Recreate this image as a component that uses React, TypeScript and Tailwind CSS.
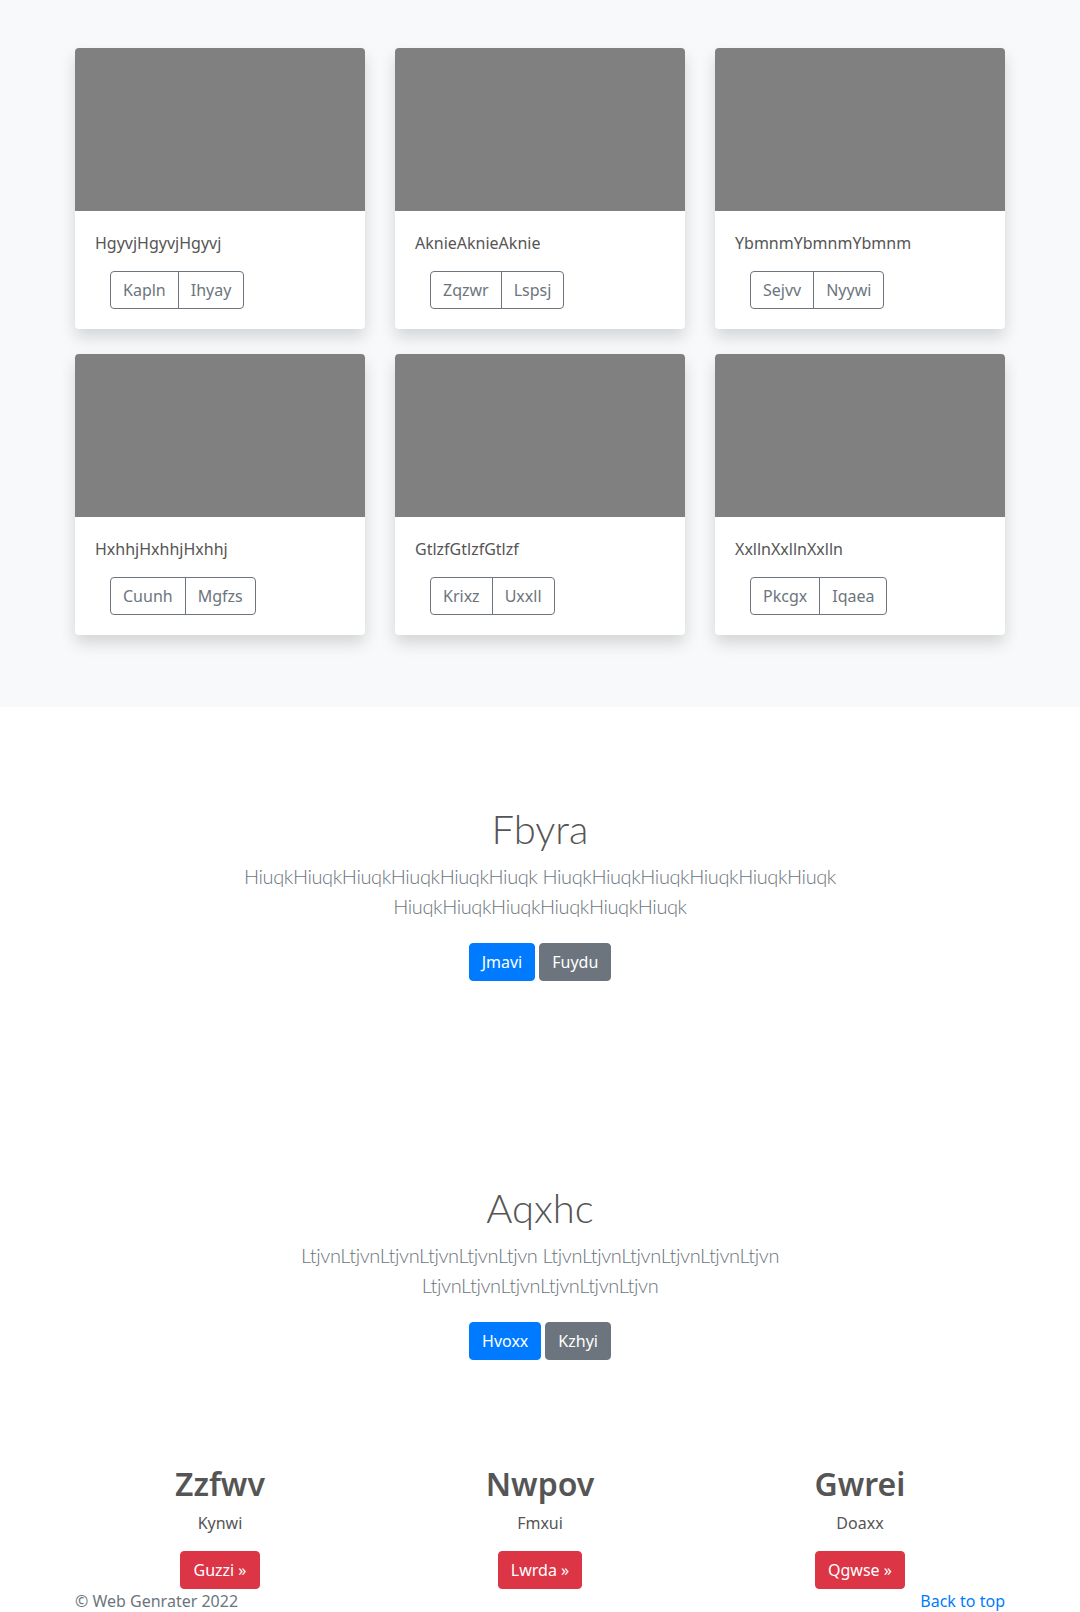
import React from 'react'

/* ─── Data ───────────────────────────────────────────────────────────────── */

const cards = [
  { title: 'HgyvjHgyvjHgyvj', actions: ['Kapln', 'Ihyay'] },
  { title: 'AknieAknieAknie', actions: ['Zqzwr', 'Lspsj'] },
  { title: 'YbmnmYbmnmYbmnm', actions: ['Sejvv', 'Nyywi'] },
  { title: 'HxhhjHxhhjHxhhj', actions: ['Cuunh', 'Mgfzs'] },
  { title: 'GtlzfGtlzfGtlzf', actions: ['Krixz', 'Uxxll'] },
  { title: 'XxllnXxllnXxlln', actions: ['Pkcgx', 'Iqaea'] },
]

const heroes = [
  {
    title: 'Fbyra',
    lead: 'HiuqkHiuqkHiuqkHiuqkHiuqkHiuqk HiuqkHiuqkHiuqkHiuqkHiuqkHiuqk HiuqkHiuqkHiuqkHiuqkHiuqkHiuqk',
    primary: 'Jmavi',
    secondary: 'Fuydu',
  },
  {
    title: 'Aqxhc',
    lead: 'LtjvnLtjvnLtjvnLtjvnLtjvnLtjvn LtjvnLtjvnLtjvnLtjvnLtjvnLtjvn LtjvnLtjvnLtjvnLtjvnLtjvnLtjvn',
    primary: 'Hvoxx',
    secondary: 'Kzhyi',
  },
]

const features = [
  { title: 'Zzfwv', text: 'Kynwi', action: 'Guzzi' },
  { title: 'Nwpov', text: 'Fmxui', action: 'Lwrda' },
  { title: 'Gwrei', text: 'Doaxx', action: 'Qgwse' },
]

/* ─── Component ──────────────────────────────────────────────────────────── */

export default function App() {
  return (
    <div className="min-h-screen bg-white text-base leading-6 text-[#555] font-['Segoe_UI','Noto_Sans',sans-serif]">
      {/* Album cards */}
      <section className="bg-[#f8f9fa] pt-12 pb-[72px]">
        <div className="w-[960px] mx-auto px-[15px]">
          <div className="grid grid-cols-3 gap-x-[30px] gap-y-[25px]">
            {cards.map((card) => (
              <div
                key={card.title}
                className="bg-white rounded shadow-[0_0.5rem_1rem_rgba(0,0,0,0.15)] overflow-hidden"
              >
                <div className="h-[163px] bg-[#808080]" />
                <div className="p-5">
                  <p className="mb-4 leading-6">{card.title}</p>
                  <div className="flex ml-[15px]">
                    {card.actions.map((a, idx) => (
                      <button
                        key={a}
                        className={
                          idx === 0
                            ? 'px-3 py-1.5 leading-6 border border-[#6c757d] text-[#6c757d] rounded-l'
                            : '-ml-px px-3 py-1.5 leading-6 border border-[#6c757d] text-[#6c757d] rounded-r'
                        }
                      >
                        {a}
                      </button>
                    ))}
                  </div>
                </div>
              </div>
            ))}
          </div>
        </div>
      </section>

      {/* Jumbotrons */}
      {heroes.map((h) => (
        <section key={h.title} className="text-center pt-[98px] pb-[105px]">
          <div className="max-w-[640px] mx-auto px-[15px]">
            <h1 className="text-[40px] leading-[1.2] font-light mb-2 font-['Lato',sans-serif]">{h.title}</h1>
            <p className="text-xl leading-[30px] font-light tracking-[-0.4px] text-[#6c757d] mb-[22px] font-['Lato',sans-serif]">
              {h.lead}
            </p>
            <div className="flex justify-center gap-1">
              <button className="px-3 py-1.5 leading-6 rounded border border-[#007bff] bg-[#007bff] text-white">
                {h.primary}
              </button>
              <button className="px-3 py-1.5 leading-6 rounded border border-[#6c757d] bg-[#6c757d] text-white">
                {h.secondary}
              </button>
            </div>
          </div>
        </section>
      ))}

      {/* Three columns */}
      <div className="w-[960px] mx-auto px-[15px]">
        <div className="grid grid-cols-3 gap-x-[30px] text-center">
          {features.map((f) => (
            <div key={f.title}>
              <h2 className="text-[32px] leading-[1.2] font-semibold mb-2">{f.title}</h2>
              <p className="mb-4">{f.text}</p>
              <button className="px-3 py-1.5 leading-6 rounded border border-[#dc3545] bg-[#dc3545] text-white">
                {f.action} &raquo;
              </button>
            </div>
          ))}
        </div>
      </div>

      {/* Footer */}
      <footer className="text-[#6c757d]">
        <div className="w-[960px] mx-auto px-[15px] flex justify-between">
          <p>&copy; Web Genrater 2022</p>
          <a href="#" className="text-[#007bff]">
            Back to top
          </a>
        </div>
      </footer>
    </div>
  )
}
